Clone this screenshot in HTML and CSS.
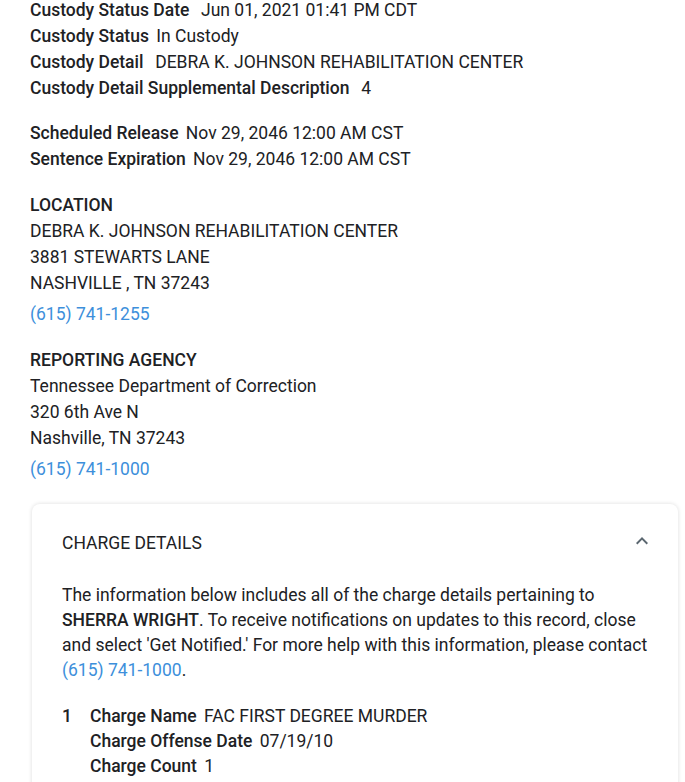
FILE: index.html
```html
<!DOCTYPE html>
<html>
<head>
<meta charset="utf-8">
<link rel="stylesheet" href="styles.css">
</head>
<body>
<div class="page">
  <div class="group first">
    <div class="row"><span class="lbl">Custody Status Date</span> <span class="val">&nbsp;Jun 01, 2021 01:41 PM CDT</span></div>
    <div class="row"><span class="lbl">Custody Status</span> <span class="val">In Custody</span></div>
    <div class="row"><span class="lbl">Custody Detail</span> <span class="val">&nbsp;DEBRA K. JOHNSON REHABILITATION CENTER</span></div>
    <div class="row"><span class="lbl">Custody Detail Supplemental Description</span> <span class="val">&nbsp;4</span></div>
  </div>
  <div class="group">
    <div class="row"><span class="lbl">Scheduled Release</span> <span class="val">Nov 29, 2046 12:00 AM CST</span></div>
    <div class="row"><span class="lbl">Sentence Expiration</span> <span class="val">Nov 29, 2046 12:00 AM CST</span></div>
  </div>
  <div class="group addr">
    <div class="row head">LOCATION</div>
    <div class="row">DEBRA K. JOHNSON REHABILITATION CENTER</div>
    <div class="row">3881 STEWARTS LANE</div>
    <div class="row">NASHVILLE , TN 37243</div>
    <div class="row phone"><a class="link" href="#">(615) 741-1255</a></div>
  </div>
  <div class="group addr">
    <div class="row head">REPORTING AGENCY</div>
    <div class="row">Tennessee Department of Correction</div>
    <div class="row">320 6th Ave N</div>
    <div class="row">Nashville, TN 37243</div>
    <div class="row phone"><a class="link" href="#">(615) 741-1000</a></div>
  </div>

  <div class="card">
    <div class="card-head">
      <div class="card-title">CHARGE DETAILS</div>
      <svg class="chev" width="24" height="24" viewBox="0 0 24 24"><path d="M12 8l-6 6 1.41 1.41L12 10.83l4.59 4.58L18 14z" fill="#5b6770"/></svg>
    </div>
    <p class="intro">The information below includes all of the charge details pertaining to <span class="strong">SHERRA WRIGHT</span>. To receive notifications on updates to this record, close and select 'Get Notified.' For more help with this information, please contact <a class="link" href="#">(615) 741-1000</a>.</p>
    <div class="charge">
      <div class="num">1</div>
      <div class="charge-rows">
        <div class="crow"><span class="lbl">Charge Name</span> <span class="val">FAC FIRST DEGREE MURDER</span></div>
        <div class="crow"><span class="lbl">Charge Offense Date</span> <span class="val">07/19/10</span></div>
        <div class="crow"><span class="lbl">Charge Count</span> <span class="val">1</span></div>
      </div>
    </div>
  </div>
</div>
</body>
</html>
```

FILE: styles.css
```css
html, body {
  margin: 0;
  padding: 0;
  background: #ffffff;
}
body {
  font-family: Roboto, "Liberation Sans", Arial, sans-serif;
  font-size: 17.5px;
  color: #202124;
  overflow: hidden;
}
.page {
  padding: 0 7px 0 30px;
}
.group {
  margin-top: 19px;
}
.group.addr {
  margin-top: 20px;
}
.group.first {
  margin-top: -3px;
}
.row {
  line-height: 26px;
  white-space: nowrap;
}
.lbl {
  font-weight: 500;
}
.val {
  margin-left: 3px;
}
.head {
  font-weight: 500;
}
.phone {
  margin-top: 5px;
}
.link {
  color: #3d8fdb;
  text-decoration: none;
}
.card {
  margin-top: 22px;
  margin-left: 2px;
  border-radius: 8px;
  box-shadow: 0 0 4px rgba(0, 0, 0, 0.14);
  padding: 26px 30px 20px 30px;
}
.card-head {
  display: flex;
  align-items: center;
  justify-content: space-between;
  height: 26px;
}
.card-title {
  line-height: 26px;
}
.chev {
  display: block;
  margin-right: -6px;
  margin-top: -4px;
}
.intro {
  margin: 27px 0 0 0;
  line-height: 25px;
}
.strong {
  font-weight: 500;
}
.charge {
  margin-top: 21px;
  display: flex;
}
.num {
  width: 28px;
  line-height: 25px;
  font-weight: 500;
}
.crow {
  line-height: 25px;
}
```
